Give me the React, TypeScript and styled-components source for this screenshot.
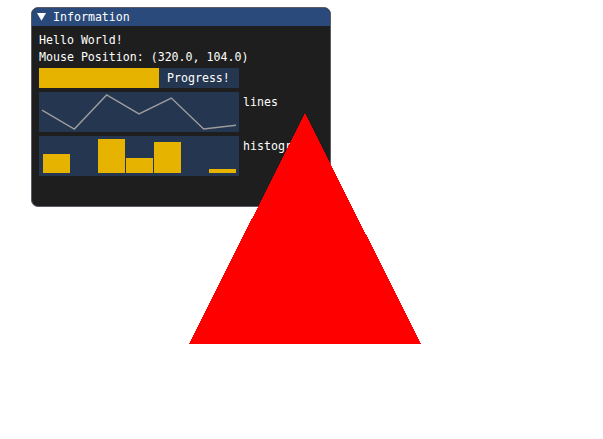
import React from "react";
import styled, { createGlobalStyle } from "styled-components";

const Global = createGlobalStyle`
  html, body { margin: 0; padding: 0; background: #ffffff; }
  * { box-sizing: border-box; }
`;

const Page = styled.div`
  position: relative;
  width: 603px;
  height: 439px;
  padding: 7px 0 0 31px;
  background: #ffffff;
  overflow: hidden;
  font-family: "DejaVu Sans Mono", "Liberation Mono", monospace;
  font-size: 11.6px;
  color: #ffffff;
`;

const Window = styled.div`
  width: 300px;
  height: 200px;
  display: flex;
  flex-direction: column;
  background: #1e1e1e;
  border: 1px solid #5c5c68;
  border-radius: 7px;
  overflow: hidden;
`;

const TitleBar = styled.div`
  height: 18px;
  flex: none;
  display: flex;
  align-items: center;
  gap: 7px;
  padding-left: 5px;
  background: #294a7a;
  line-height: 13px;
`;

const Body = styled.div`
  display: flex;
  flex-direction: column;
  gap: 4px;
  padding: 8px 7px;
`;

const TextLine = styled.div`
  height: 13px;
  line-height: 13px;
  white-space: pre;
`;

const Row = styled.div`
  display: flex;
  gap: 4px;
  align-items: flex-start;
`;

const Frame = styled.div<{ $h: number }>`
  position: relative;
  width: 200px;
  height: ${(p) => p.$h}px;
  background: #243650;
  flex: none;
`;

const Fill = styled.div`
  height: 100%;
  background: #e6b300;
`;

const ProgressBar = styled(Frame)`
  display: flex;
  align-items: center;
`;

const Overlay = styled.span`
  margin-left: 8px;
  line-height: 13px;
`;

const Label = styled.div`
  padding-top: 4px;
  line-height: 13px;
`;

const Chart = styled.svg`
  display: block;
`;

const Triangle = styled.svg`
  position: absolute;
  left: 189px;
  top: 113px;
`;

const values = [0.6, 0.1, 1.0, 0.5, 0.92, 0.1, 0.2];
const vmin = 0.1;
const vmax = 1.0;

function Lines() {
  const innerW = 194;
  const innerH = 34;
  const pts = values
    .map((v, i) => {
      const x = 3 + (i * innerW) / (values.length - 1);
      const y = 3 + innerH - ((v - vmin) / (vmax - vmin)) * innerH;
      return `${x.toFixed(2)},${y.toFixed(2)}`;
    })
    .join(" ");
  return (
    <Chart width={200} height={40}>
      <polyline points={pts} fill="none" stroke="#9c9c9c" strokeWidth={1.4} />
    </Chart>
  );
}

function Histogram() {
  const innerW = 194;
  const innerH = 34;
  const w = innerW / values.length;
  return (
    <Chart width={200} height={40}>
      {values.map((v, i) => {
        const h = ((v - vmin) / (vmax - vmin)) * innerH;
        if (h < 0.5) return null;
        const x0 = Math.round(3 + i * w + 1);
        const x1 = Math.round(3 + (i + 1) * w);
        return (
          <rect
            key={i}
            x={x0}
            y={Math.round(3 + innerH - h)}
            width={x1 - x0}
            height={Math.round(h)}
            fill="#e6b300"
            shapeRendering="crispEdges"
          />
        );
      })}
    </Chart>
  );
}

export default function App() {
  return (
    <Page>
      <Global />
      <Window>
        <TitleBar>
          <svg width={9} height={8} viewBox="0 0 9 8">
            <polygon points="0,0 9,0 4.5,7.8" fill="#ffffff" />
          </svg>
          <span>Information</span>
        </TitleBar>
        <Body>
          <TextLine>Hello World!</TextLine>
          <TextLine>Mouse Position: (320.0, 104.0)</TextLine>
          <ProgressBar $h={20}>
            <Fill style={{ width: `${0.6 * 100}%` }} />
            <Overlay>Progress!</Overlay>
          </ProgressBar>
          <Row>
            <Frame $h={40}>
              <Lines />
            </Frame>
            <Label>lines</Label>
          </Row>
          <Row>
            <Frame $h={40}>
              <Histogram />
            </Frame>
            <Label>histogram</Label>
          </Row>
        </Body>
      </Window>
      <Triangle width={232} height={231} viewBox="0 0 232 231">
        <polygon points="116,0 232,231 0,231" fill="#ff0000" shapeRendering="crispEdges" />
      </Triangle>
    </Page>
  );
}
